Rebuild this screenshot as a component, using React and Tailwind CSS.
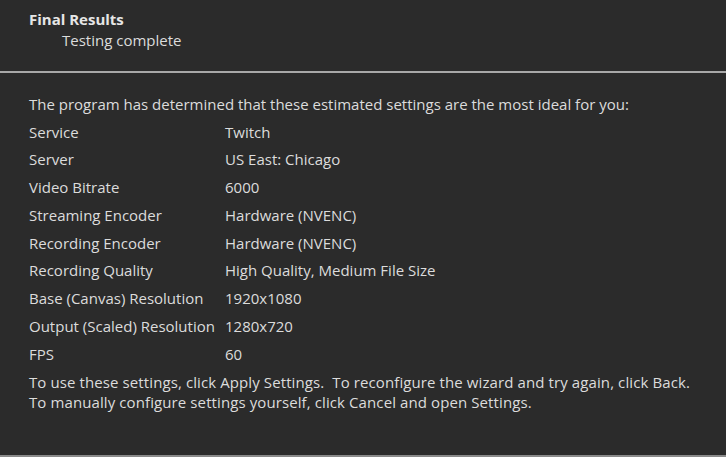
import React from 'react';

const ROWS = [
  ['Service', 'Twitch'],
  ['Server', 'US East: Chicago'],
  ['Video Bitrate', '6000'],
  ['Streaming Encoder', 'Hardware (NVENC)'],
  ['Recording Encoder', 'Hardware (NVENC)'],
  ['Recording Quality', 'High Quality, Medium File Size'],
  ['Base (Canvas) Resolution', '1920x1080'],
  ['Output (Scaled) Resolution', '1280x720'],
  ['FPS', '60'],
];

const App = () => {
  return (
    <div
      className="w-[726px] h-[457px] bg-[#2b2b2b] text-[#dcdcdc] text-[15px] flex flex-col overflow-hidden"
      style={{ fontFamily: '"Open Sans", sans-serif' }}
    >
      {/* header */}
      <div className="h-[73px] pl-[29px] pt-[9px] border-b-2 border-[#a8a8a8]">
        <div className="font-bold leading-[21px] text-[#e6e6e6]">Final Results</div>
        <div className="pl-[33px] leading-[21px]">Testing complete</div>
      </div>

      {/* body */}
      <div className="flex-1 pl-[29px] pt-[19px] border-b-2 border-[#8a8a8a]">
        <p className="leading-[24px]">
          The program has determined that these estimated settings are the most ideal for you:
        </p>
        <div className="flex flex-col mt-[2px]">
          {ROWS.map(([k, v]) => (
            <div key={k} className="flex h-[27.75px] items-center">
              <span className="w-[196px] shrink-0">{k}</span>
              <span>{v}</span>
            </div>
          ))}
        </div>
        <p className="leading-[20px] mt-[4px] tracking-[0.1px]">
          To use these settings, click Apply Settings.&nbsp; To reconfigure the wizard and try again, click Back.
          <br />
          To manually configure settings yourself, click Cancel and open Settings.
        </p>
      </div>
    </div>
  );
};

export default App;
